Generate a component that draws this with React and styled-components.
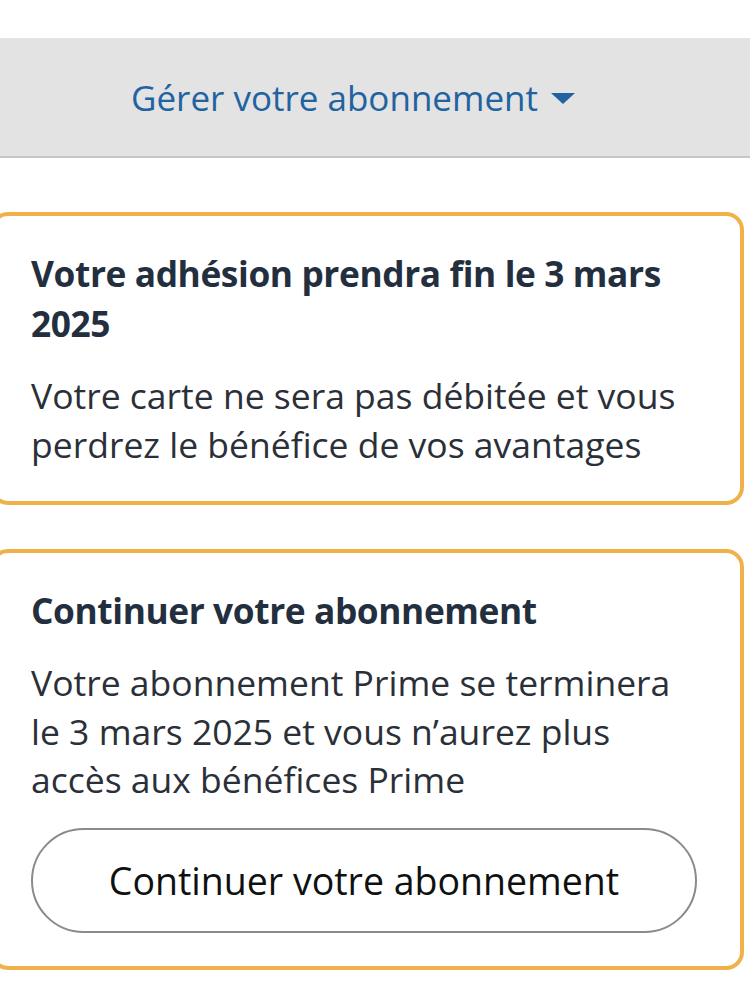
import React from 'react';
import styled, { createGlobalStyle } from 'styled-components';

const GlobalStyle = createGlobalStyle`
  html, body {
    margin: 0;
    padding: 0;
    background: #fff;
    overflow: hidden;
  }
  body {
    font-family: "Open Sans", "Noto Sans", sans-serif;
  }
`;

const Page = styled.div`
  width: 750px;
  padding-top: 38px;
`;

const ManageBar = styled.div`
  height: 118px;
  background: #e3e3e3;
  border-bottom: 2px solid #c6c6c6;
  display: flex;
  align-items: center;
  justify-content: center;
  padding-right: 44px;
`;

const ManageLink = styled.span`
  display: flex;
  align-items: center;
  gap: 13px;
  color: #2162a1;
  font-size: 35px;
`;

const Caret = styled.span`
  width: 0;
  height: 0;
  border-left: 12px solid transparent;
  border-right: 12px solid transparent;
  border-top: 11px solid #2162a1;
  margin-top: 2px;
`;

const Cards = styled.div`
  display: flex;
  flex-direction: column;
  gap: 44px;
  margin: 54px 6px 0 -10px;
`;

const Card = styled.section`
  border: 4px solid #f0b04a;
  border-radius: 18px;
  padding: 32px 43px 33px 37px;
  background: #fff;
`;

const Title = styled.h2`
  margin: 0;
  font-size: 35.3px;
  line-height: 50px;
  font-weight: 700;
  color: #232f3e;
  letter-spacing: -0.4px;
`;

const Text = styled.p`
  margin: 23px 0 0;
  font-size: 35.5px;
  line-height: 48.5px;
  color: #2b3038;
`;

const PillButton = styled.button`
  margin-top: 24px;
  width: 100%;
  height: 105px;
  border: 2px solid #8a8a8a;
  border-radius: 53px;
  background: #fff;
  font-family: inherit;
  font-size: 37.5px;
  color: #0f1111;
  cursor: pointer;
`;

export default function App() {
  return (
    <Page>
      <GlobalStyle />
      <ManageBar>
        <ManageLink>
          Gérer votre abonnement
          <Caret />
        </ManageLink>
      </ManageBar>

      <Cards>
        <Card>
          <Title>Votre adhésion prendra fin le 3 mars 2025</Title>
          <Text>Votre carte ne sera pas débitée et vous perdrez le bénéfice de vos avantages</Text>
        </Card>

        <Card>
          <Title>Continuer votre abonnement</Title>
          <Text>
            Votre abonnement Prime se terminera le 3 mars 2025 et vous n’aurez plus accès aux bénéfices Prime
          </Text>
          <PillButton>Continuer votre abonnement</PillButton>
        </Card>
      </Cards>
    </Page>
  );
}
